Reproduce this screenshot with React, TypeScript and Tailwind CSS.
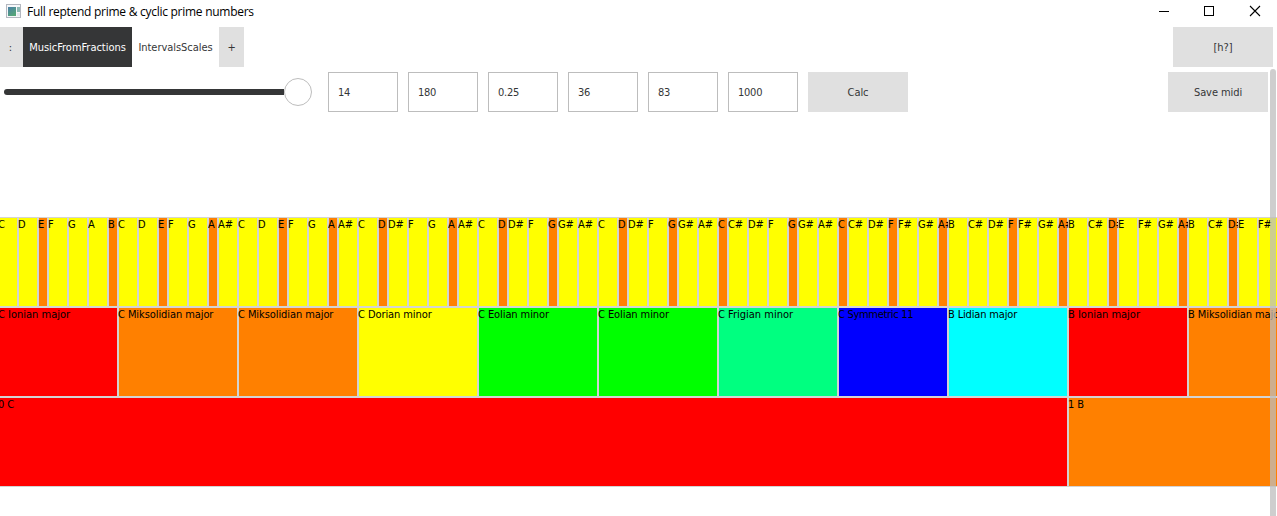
import React from "react";

type Note = [name: string, short?: 1];

const scales: { name: string; color: string; width: string; notes: Note[] }[] = [
  { name: "C Ionian major", color: "bg-[#ff0000] tracking-[0px]", width: "w-[120px]", notes: [["C"], ["D"], ["E", 1], ["F"], ["G"], ["A"], ["B", 1]] },
  { name: "C Miksolidian major", color: "bg-[#ff8000]", width: "w-[120px]", notes: [["C"], ["D"], ["E", 1], ["F"], ["G"], ["A", 1], ["A#"]] },
  { name: "C Miksolidian major", color: "bg-[#ff8000]", width: "w-[120px]", notes: [["C"], ["D"], ["E", 1], ["F"], ["G"], ["A", 1], ["A#"]] },
  { name: "C Dorian minor", color: "bg-[#ffff00]", width: "w-[120px]", notes: [["C"], ["D", 1], ["D#"], ["F"], ["G"], ["A", 1], ["A#"]] },
  { name: "C Eolian minor", color: "bg-[#00ff00]", width: "w-[120px]", notes: [["C"], ["D", 1], ["D#"], ["F"], ["G", 1], ["G#"], ["A#"]] },
  { name: "C Eolian minor", color: "bg-[#00ff00]", width: "w-[120px]", notes: [["C"], ["D", 1], ["D#"], ["F"], ["G", 1], ["G#"], ["A#"]] },
  { name: "C Frigian minor", color: "bg-[#00ff80] tracking-[0px]", width: "w-[120px]", notes: [["C", 1], ["C#"], ["D#"], ["F"], ["G", 1], ["G#"], ["A#"]] },
  { name: "C Symmetric 11", color: "bg-[#0000ff] tracking-[-0.3px]", width: "w-[110px]", notes: [["C", 1], ["C#"], ["D#"], ["F", 1], ["F#"], ["G#"], ["A#", 1]] },
  { name: "B Lidian major", color: "bg-[#00ffff] tracking-[-0.15px]", width: "w-[120px]", notes: [["B"], ["C#"], ["D#"], ["F", 1], ["F#"], ["G#"], ["A#", 1]] },
  { name: "B Ionian major", color: "bg-[#ff0000] tracking-[0px]", width: "w-[120px]", notes: [["B"], ["C#"], ["D#", 1], ["E"], ["F#"], ["G#"], ["A#", 1]] },
  { name: "B Miksolidian major", color: "bg-[#ff8000]", width: "w-[120px]", notes: [["B"], ["C#"], ["D#", 1], ["E"], ["F#"]] },
];

function Cell({ label, className }: { label: string; className: string }) {
  return (
    <div
      className={`h-[90px] shrink-0 overflow-hidden whitespace-nowrap pt-px leading-[13px] text-black shadow-[inset_0_0_0_1px_#d3d3d3] ${className}`}
    >
      {label}
    </div>
  );
}

function AppIcon() {
  return (
    <svg width="16" height="14" viewBox="0 0 16 14" className="ml-1.5 shrink-0">
      <defs>
        <linearGradient id="pane" x1="0" y1="0" x2="0.6" y2="1">
          <stop offset="0" stopColor="#4b7fa8" />
          <stop offset="1" stopColor="#55a678" />
        </linearGradient>
      </defs>
      <rect x="0.5" y="0.5" width="14" height="13" fill="#f6f7f9" stroke="#b4b8c0" />
      <rect x="2" y="3" width="8" height="9" fill="url(#pane)" />
      <rect x="11" y="3" width="3" height="5" fill="#8cb9b4" />
      <rect x="11" y="9" width="3" height="3" fill="#e4e9ee" />
    </svg>
  );
}

function TitleBar() {
  return (
    <header className="flex h-[27px] shrink-0 items-start pt-1">
      <AppIcon />
      <h1 className="ml-[5px] flex-1 whitespace-nowrap font-['Open_Sans',sans-serif] text-[12px] leading-4 tracking-[-0.27px] text-black [font-stretch:normal]">
        Full reptend prime &amp; cyclic prime numbers
      </h1>
      <svg width="118" height="14" viewBox="0 0 118 14" fill="none" stroke="#000" shapeRendering="crispEdges">
        <path d="M0 7.5H10M45.5 2.5h9v9h-9z" />
        <path d="M91 2l10 10M101 2L91 12" shapeRendering="auto" strokeWidth="1.1" />
      </svg>
    </header>
  );
}

export default function App() {
  const fields = ["14", "180", "0.25", "36", "83", "1000"];
  return (
    <div className="relative flex h-[516px] w-[1277px] flex-col overflow-hidden bg-white font-['DejaVu_Sans_Condensed','DejaVu_Sans',sans-serif] text-[11px] tracking-[-0.08px] text-[#353637] [font-stretch:condensed]">
      <TitleBar />
      <nav className="flex h-10 shrink-0 items-stretch pr-1">
        <button className="w-[23px] bg-[#e0e0e0] pr-0.5 pt-0.5">:</button>
        <button className="w-[109px] bg-[#353637] pt-0.5 tracking-[-0.03px] text-white">MusicFromFractions</button>
        <button className="w-[87px] pt-0.5 tracking-[-0.05px]">IntervalsScales</button>
        <button className="w-[25px] bg-[#e0e0e0] pt-0.5">+</button>
        <button className="ml-auto w-[100px] bg-[#e0e0e0] pt-0.5">[h?]</button>
      </nav>
      <div className="mt-[5px] flex h-10 shrink-0 items-stretch gap-2.5 pr-[9px]">
        <div className="mr-1.5 flex w-[312px] items-center pl-1">
          <div className="h-1.5 w-[280px] rounded-l-full bg-[#353637]" />
          <div className="size-7 rounded-full border border-[#bdbdbd] bg-white" />
        </div>
        {fields.map((v) => (
          <div key={v} className="flex w-[70px] items-center border border-[#bdbdbd] pl-[9px] pt-0.5 tracking-[-0.25px]">
            {v}
          </div>
        ))}
        <button className="w-[100px] bg-[#e0e0e0] pt-0.5">Calc</button>
        <button className="ml-auto w-[100px] bg-[#e0e0e0] pt-0.5">Save midi</button>
      </div>
      <main className="-ml-0.5 mt-[105px]">
        <div className="flex">
          {scales.flatMap((s, i) =>
            s.notes.map(([name, short], j) => (
              <Cell key={`${i}-${j}`} label={name} className={short ? "w-2.5 bg-[#ff8000]" : "w-5 bg-[#ffff00]"} />
            )),
          )}
        </div>
        <div className="flex">
          {scales.map((s, i) => (
            <Cell key={i} label={s.name} className={`${s.width} ${s.color}`} />
          ))}
        </div>
        <div className="flex">
          <Cell label="0 C" className="w-[1070px] bg-[#ff0000]" />
          <Cell label="1 B" className="w-[240px] bg-[#ff8000]" />
        </div>
      </main>
      <div className="absolute right-px top-[69px] h-[460px] w-1.5 rounded-full bg-[#bdbdbd]/75" />
    </div>
  );
}
